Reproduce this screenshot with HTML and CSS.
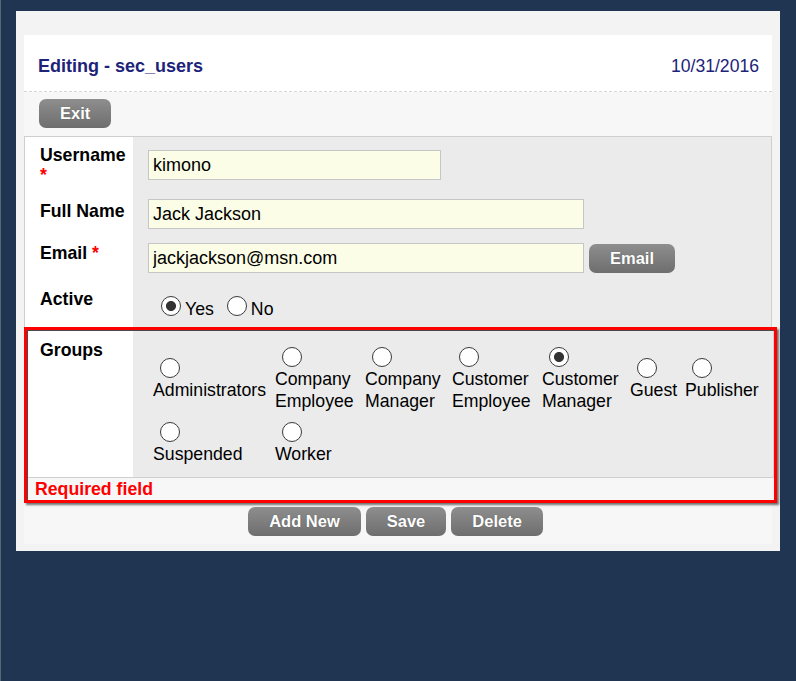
FILE: index.html
```html
<!DOCTYPE html>
<html lang="en">
<head>
<meta charset="utf-8">
<title>Editing - sec_users</title>
<link rel="stylesheet" href="styles.css">
</head>
<body>
<div class="page">
  <div class="panel">
    <div class="sheet">
      <div class="header">
        <h1 class="title">Editing - sec_users</h1>
        <span class="date">10/31/2016</span>
      </div>
      <div class="toolbar">
        <button class="btn" type="button">Exit</button>
      </div>

      <div class="form">
        <div class="row">
          <div class="lbl">Username<br><span class="req">*</span></div>
          <div class="val"><input class="field field-short" type="text" value="kimono"></div>
        </div>
        <div class="row">
          <div class="lbl">Full Name</div>
          <div class="val"><input class="field" type="text" value="Jack Jackson"></div>
        </div>
        <div class="row">
          <div class="lbl">Email <span class="req">*</span></div>
          <div class="val val-roomy">
            <input class="field" type="text" value="jackjackson@msn.com">
            <button class="btn btn-email" type="button">Email</button>
          </div>
        </div>
        <div class="row">
          <div class="lbl">Active</div>
          <div class="val val-active">
            <label class="choice"><input class="radio" type="radio" name="active" checked><span>Yes</span></label>
            <label class="choice"><input class="radio" type="radio" name="active"><span>No</span></label>
          </div>
        </div>
      </div>

      <div class="groups-box">
        <div class="groups-inner">
          <div class="row">
            <div class="lbl lbl-groups">Groups</div>
            <div class="val val-groups">
              <div class="options">
                <label class="opt"><input class="radio" type="radio" name="group"><span>Administrators</span></label>
                <label class="opt"><input class="radio" type="radio" name="group"><span>Company Employee</span></label>
                <label class="opt"><input class="radio" type="radio" name="group"><span>Company Manager</span></label>
                <label class="opt"><input class="radio" type="radio" name="group"><span>Customer Employee</span></label>
                <label class="opt"><input class="radio" type="radio" name="group" checked><span>Customer Manager</span></label>
                <label class="opt"><input class="radio" type="radio" name="group"><span>Guest</span></label>
                <label class="opt"><input class="radio" type="radio" name="group"><span>Publisher</span></label>
                <label class="opt"><input class="radio" type="radio" name="group"><span>Suspended</span></label>
                <label class="opt"><input class="radio" type="radio" name="group"><span>Worker</span></label>
              </div>
            </div>
          </div>
          <div class="error">Required field</div>
        </div>
      </div>

      <div class="actions">
        <button class="btn" type="button">Add New</button>
        <button class="btn" type="button">Save</button>
        <button class="btn" type="button">Delete</button>
      </div>
    </div>
  </div>
</div>
</body>
</html>
```

FILE: styles.css
```css
html {
  background: #1f3552;
}

body {
  margin: 0;
  min-height: 681px;
  border-left: 1px solid #56677c;
  background: #1f3552;
  font-family: "Liberation Sans", Arial, sans-serif;
  color: #000;
}

.page {
  padding: 11px 0 0 15px;
}

.panel {
  width: 764px;
  box-sizing: border-box;
  padding: 24px 8px 7px;
  background: #f3f3f3;
}

.sheet {
  background: #f7f7f7;
  padding-bottom: 8px;
}

/* header */
.header {
  height: 57px;
  box-sizing: border-box;
  display: flex;
  align-items: center;
  justify-content: space-between;
  padding: 6px 13px 0 14px;
  background: #fff;
  border-bottom: 1px dashed #d6d6d6;
}

.title {
  margin: 0;
  font-size: 18px;
  font-weight: bold;
  color: #1c2379;
}

.date {
  font-size: 17.6px;
  color: #1c2379;
}

.toolbar {
  padding: 7px 15px 8px;
}

/* buttons */
.btn {
  height: 29px;
  padding: 0 21px;
  border: none;
  border-radius: 7px;
  background: linear-gradient(#8e8e8e, #6e6e6e);
  color: #fff;
  font-family: "Liberation Sans", Arial, sans-serif;
  font-size: 16.5px;
  font-weight: bold;
  line-height: 29px;
  text-shadow: 0 0 1px rgba(0, 0, 0, 0.35);
  cursor: pointer;
}

.btn-email {
  margin-left: 5px;
}

/* form */
.form {
  border: 1px solid #cfcfcf;
  border-bottom: none;
}

.row {
  display: flex;
}

.lbl {
  width: 108px;
  box-sizing: border-box;
  padding: 8px 5px 8px 15px;
  background: #fff;
  font-size: 17.7px;
  font-weight: bold;
  line-height: 20px;
}

.req {
  color: #f00;
}

.val {
  flex: 1;
  display: flex;
  align-items: center;
  padding: 6px 15px;
  background: #ebebeb;
}

.val-roomy {
  padding-top: 8px;
  padding-bottom: 8px;
}

.field {
  width: 436px;
  height: 30px;
  box-sizing: border-box;
  margin: 0;
  padding: 0 4px;
  border: 1px solid #c6c6c6;
  background: #fbfde6;
  font-family: "Liberation Sans", Arial, sans-serif;
  font-size: 18px;
  color: #000;
}

.field-short {
  width: 293px;
}

/* radios */
.radio {
  appearance: none;
  -webkit-appearance: none;
  width: 20px;
  height: 20px;
  box-sizing: border-box;
  margin: 0;
  border: 1px solid #3a3a3a;
  border-radius: 50%;
  background: #fff;
}

.radio:checked {
  background: radial-gradient(circle, #333 0 4.6px, #fff 5.4px);
}

.val-active {
  align-items: flex-start;
  padding: 15px 15px 5px 28px;
}

.choice {
  display: inline-flex;
  align-items: center;
  margin-right: 13px;
  font-size: 17.7px;
  line-height: 22px;
}

.choice .radio {
  margin: 0 4px 6px 0;
}

/* groups */
.groups-box {
  margin-right: -5px;
  border: 3px solid #f00;
  box-shadow: 2px 2px 2px rgba(0, 0, 0, 0.55);
}

.groups-inner {
  border-top: 1px solid #4a4a4a;
  border-left: 1px solid #4a4a4a;
}

.lbl-groups {
  width: 105px;
  padding: 9px 5px 8px 12px;
}

.val-groups {
  padding: 16px 13px 12px 20px;
  border-right: 1px solid #d0d0d0;
}

.options {
  display: grid;
  grid-template-columns: 122px 90px 87px 90px 88px 55px auto;
  row-gap: 10px;
  align-items: center;
}

.opt {
  display: flex;
  flex-direction: column;
  align-items: flex-start;
  font-size: 17.7px;
  line-height: 22px;
}

.opt .radio {
  margin: 0 0 1px 7px;
}

.error {
  border-top: 1px solid #cfcfcf;
  padding-left: 7px;
  font-size: 17.7px;
  font-weight: bold;
  line-height: 22px;
  color: #f00;
}

/* bottom actions */
.actions {
  display: flex;
  justify-content: center;
  gap: 5px;
  margin-top: 4px;
  padding-right: 5px;
}
```
